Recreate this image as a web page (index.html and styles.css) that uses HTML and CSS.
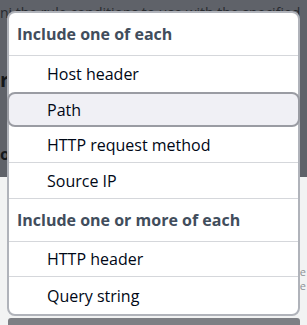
FILE: index.html
```html
<!DOCTYPE html>
<html lang="en">
  <head>
    <meta charset="UTF-8" />
    <meta name="viewport" content="width=device-width, initial-scale=1.0" />
    <title>Condition type</title>
    <link rel="stylesheet" href="styles.css">
  </head>
  <body>
    <!-- Page behind the dropdown -->
    <div class="page">
      <div class="page-top">
        <p class="page-line">ni the rule conditions to use with the specified</p>
        <p class="page-title">r</p>
        <p class="page-title small">o</p>
      </div>
      <div class="page-bottom">
        <p class="page-note">e</p>
        <p class="page-note">e</p>
        <div class="page-bar"></div>
      </div>
    </div>

    <!-- Dropdown -->
    <div class="dropdown">
      <div class="group-label">Include one of each</div>
      <ul class="options">
        <li class="before-highlight">Host header</li>
        <li class="highlighted">Path</li>
        <li>HTTP request method</li>
        <li>Source IP</li>
      </ul>
      <div class="group-label">Include one or more of each</div>
      <ul class="options">
        <li class="short">HTTP header</li>
        <li class="last">Query string</li>
      </ul>
    </div>
  </body>
</html>
```

FILE: styles.css
```css
/* Global Styles */
* {
  margin: 0;
  padding: 0;
  box-sizing: border-box;
  font-family: "Open Sans", "Noto Sans", sans-serif;
}

body {
  width: 307px;
  height: 325px;
  overflow: hidden;
  position: relative;
  background-color: #f2f3f3;
}

/* Background page */
.page {
  display: flex;
  flex-direction: column;
  height: 100%;
}

.page-top {
  height: 177px;
  background-color: #5f6269;
}

.page-line {
  font-size: 14px;
  line-height: 20px;
  padding-top: 3px;
  white-space: nowrap;
  color: #272a2f;
}

.page-title {
  font-size: 20px;
  font-weight: 700;
  line-height: 24px;
  margin-top: 45px;
  color: #14171b;
}

.page-title.small {
  font-size: 16px;
  margin-top: 50px;
}

.page-bottom {
  flex: 1;
  display: flex;
  flex-direction: column;
  align-items: flex-end;
  padding-top: 88px;
  padding-right: 1px;
  color: #8d9196;
  font-size: 11px;
  line-height: 14px;
}

.page-bar {
  margin-top: auto;
  align-self: flex-start;
  margin-left: 8px;
  width: 292px;
  height: 7px;
  background-color: #7d7f84;
  border-radius: 3px 3px 0 0;
}

/* Dropdown */
.dropdown {
  position: absolute;
  top: 11px;
  left: 7px;
  width: 293px;
  background-color: #ffffff;
  border: 2px solid #b0b3ba;
  border-radius: 8px;
}

.group-label {
  height: 43px;
  padding-left: 8px;
  display: flex;
  align-items: center;
  font-size: 16px;
  font-weight: 700;
  color: #414d5c;
  border-bottom: 1px solid #d5d7db;
}

.options {
  list-style: none;
}

.options li {
  height: 36px;
  padding-left: 38px;
  display: flex;
  align-items: center;
  font-size: 16px;
  color: #000716;
  border-bottom: 1px solid #d5d7db;
}

.options li.before-highlight {
  border-bottom: none;
}

.options li.short {
  height: 35px;
}

.options li.last {
  border-bottom: none;
  height: 37px;
}

.options li.highlighted {
  margin: 0 -2px;
  height: 35px;
  padding-left: 38px;
  background-color: #f0f0f5;
  border: 2px solid #9a9ca3;
  border-radius: 8px;
}
```
